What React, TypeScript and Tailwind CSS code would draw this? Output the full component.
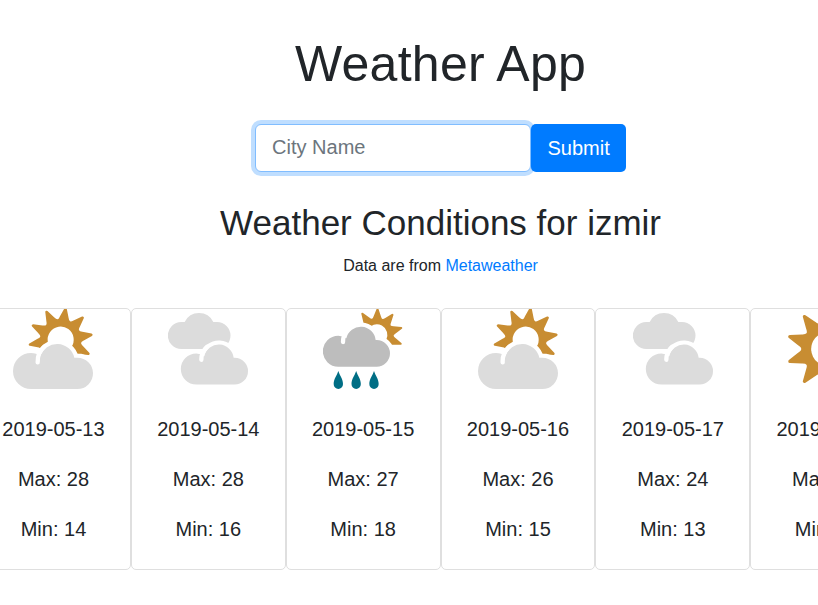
type IconName = 'light' | 'cloudy' | 'showers' | 'clear';

const days: { date: string; max: number; min: number; icon: IconName }[] = [
  { date: '2019-05-13', max: 28, min: 14, icon: 'light' },
  { date: '2019-05-14', max: 28, min: 16, icon: 'cloudy' },
  { date: '2019-05-15', max: 27, min: 18, icon: 'showers' },
  { date: '2019-05-16', max: 26, min: 15, icon: 'light' },
  { date: '2019-05-17', max: 24, min: 13, icon: 'cloudy' },
  { date: '2019-05-18', max: 27, min: 14, icon: 'clear' },
];

// Outline of a ten-rayed sun with rounded valleys, centred on the origin.
function sunPath() {
  const point = (r: number, deg: number) => {
    const a = (deg * Math.PI) / 180;
    return [r * Math.cos(a), r * Math.sin(a)].map((n) => n.toFixed(2)).join(' ');
  };
  let d = '';
  for (let k = 0; k < 10; k++) {
    const a = k * 36;
    d += `${k === 0 ? 'M' : 'L'}${point(120, a)}L${point(87, a + 8.3)}Q${point(64, a + 18)} ${point(87, a + 27.7)}`;
  }
  return d + 'Z';
}

const SUN = sunPath();

function Sun({ x, y, scale, angle }: { x: number; y: number; scale: number; angle: number }) {
  return (
    <g transform={`translate(${x} ${y}) rotate(${angle}) scale(${scale})`}>
      <path d={SUN} fill="#c88d32" stroke="#c88d32" strokeWidth="10" strokeLinejoin="round" />
      <circle r="50.500" fill="#fff" />
    </g>
  );
}

const BIG_CLOUD =
  'M54 240A54 54 0 0 1 54 132Q70 132 82 142A52.800 52.800 0 0 1 184 146L193 146A47 47 0 0 1 193 240Z';
const CLOUD =
  'M46 173A46.500 46.500 0 0 1 46 80Q58 80 70 88A44.700 44.700 0 0 1 158 93L161 93A40 40 0 0 1 161 173Z';

function WeatherIcon({ name }: { name: IconName }) {
  return (
    <svg viewBox="0 0 240 240" className="block size-20 shrink-0">
      {name === 'light' && (
        <>
          <Sun x={143} y={92} scale={0.775} angle={-9} />
          <path d={BIG_CLOUD} fill="#fff" stroke="#fff" strokeWidth="25" />
          <path d={BIG_CLOUD} fill="#dcdcdc" />
          <path d="M74 160A59 59 0 0 1 94 113" fill="none" stroke="#fff" strokeWidth="13" strokeLinecap="round" />
        </>
      )}
      {name === 'cloudy' && (
        <>
          <path d="M40 120A40 40 0 0 1 40 39L50 39A47.700 47.700 0 0 1 136 39L147 39A40 40 0 0 1 147 120Z" fill="#dcdcdc" />
          <g transform="translate(39 53.500)">
            <path d={CLOUD} fill="#fff" stroke="#fff" strokeWidth="25" />
            <path d={CLOUD} fill="#dcdcdc" />
            <path d="M61 99A52 52 0 0 1 78 60" fill="none" stroke="#fff" strokeWidth="13" strokeLinecap="round" />
          </g>
        </>
      )}
      {name === 'showers' && (
        <>
          <Sun x={161} y={78} scale={0.638} angle={-16} />
          <path d={CLOUD} fill="#fff" stroke="#fff" strokeWidth="25" />
          <path d="M0 0H112V60H0Z" fill="#fff" />
          <path d={CLOUD} fill="#bdbdbd" />
          <path d="M60 99A52 52 0 0 1 77 60" fill="none" stroke="#fff" strokeWidth="13" strokeLinecap="round" />
          {[46, 99.5, 153].map((x) => (
            <path
              key={x}
              transform={`translate(${x} 186)`}
              d="M0 0C4 13 14 24 14 39A14 15 0 0 1 -14 39C-14 24 -4 13 0 0Z"
              fill="#006e85"
            />
          ))}
        </>
      )}
      {name === 'clear' && <Sun x={120} y={120} scale={1} angle={18} />}
    </svg>
  );
}

export default function App() {
  return (
    <div className="h-[605px] w-full overflow-hidden bg-white font-['Liberation_Sans',Arial,sans-serif] text-[#212529]">
      <div className="ml-[-23.95px] flex w-[929px] flex-col items-center pt-[34px]">
        <h1 className="text-[50px] leading-[60px] tracking-[0.27px]">Weather App</h1>

        <form className="mt-[30px] flex h-12" onSubmit={(e) => e.preventDefault()}>
          <input
            type="text"
            placeholder="City Name"
            className="h-12 w-[276px] rounded-md border border-[#80bdff] bg-white px-4 pb-0.5 text-[20px] leading-[30px] shadow-[0_0_0_4px_#bfdeff] outline-none placeholder:text-[#6c757d] placeholder:opacity-100"
          />
          <button
            type="submit"
            className="relative h-12 w-[95px] rounded-[5px] bg-[#007bff] text-[20px] leading-[30px] text-white"
          >
            Submit
          </button>
        </form>

        <h2 className="mt-[30px] text-[35px] leading-[42px]">Weather Conditions for izmir</h2>
        <p className="mt-2.5 text-[16px] leading-6">
          Data are from{' '}
          <a href="#" className="text-[#007bff]">
            Metaweather
          </a>
        </p>

        <div className="mt-[30px] grid w-full grid-cols-6">
          {days.map((day) => (
            <div
              key={day.date}
              className="flex h-[262px] flex-col items-center rounded-[5px] border border-[#dfdfdf] text-[20px] leading-[30px]"
            >
              <WeatherIcon name={day.icon} />
              <div className="flex flex-col items-center gap-5 pt-[25px]">
                <p>{day.date}</p>
                <p>Max: {day.max}</p>
                <p>Min: {day.min}</p>
              </div>
            </div>
          ))}
        </div>
      </div>
    </div>
  );
}
